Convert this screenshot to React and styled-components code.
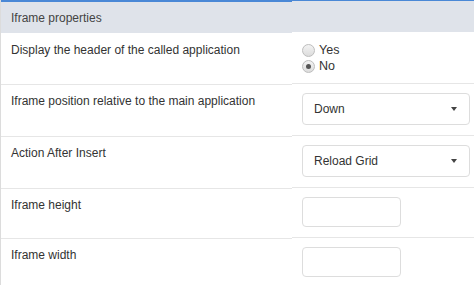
import React from 'react'
import styled, { createGlobalStyle } from 'styled-components'

const Global = createGlobalStyle`
    body {
        margin: 0;
        background: #fff;
        font-family: "Liberation Sans", Arial, sans-serif;
        font-size: 12px;
        color: #333;
    }
`

const Panel = styled.div`
    width: 474px;
    height: 285px;
    overflow: hidden;
    border-left: 1px solid #dcdcdc;
    box-sizing: border-box;
`

const Row = styled.div`
    display: grid;
    grid-template-columns: 291px 1fr;
`

const HeadCell = styled.div`
    background: #dfe3ea;
    border-top: ${p => (p.$thick ? 2 : 1)}px solid #4a88d6;
    height: 31px;
    padding-left: 10px;
    display: flex;
    align-items: center;
    color: #444;
`

const Label = styled.div`
    padding: 10px 10px 0 10px;
    line-height: 14px;
    box-shadow: 0 1px 0 #e6e6e6;
`

const Field = styled.div`
    padding: ${p => p.$top}px 4px ${p => p.$bottom}px 10px;
    border-bottom: 1px solid #e6e6e6;
`

const RadioLine = styled.label`
    display: flex;
    align-items: center;
    height: 16px;
    gap: 4px;
    font-size: 12.5px;
`

const Radio = styled.span`
    width: 11px;
    height: 11px;
    border-radius: 50%;
    border: 1px solid #bdbdbd;
    background: linear-gradient(#f3f3f3, #dcdcdc);
    display: inline-flex;
    align-items: center;
    justify-content: center;
    &::after {
        content: '';
        width: 5px;
        height: 5px;
        border-radius: 50%;
        background: ${p => (p.$checked ? '#555' : 'transparent')};
    }
`

const Select = styled.div`
    height: 30px;
    border: 1px solid #dddddd;
    border-radius: 4px;
    display: flex;
    align-items: center;
    justify-content: space-between;
    padding: 0 12px 0 11px;
    font-size: 12px;
    &::after {
        content: '';
        border-left: 3.5px solid transparent;
        border-right: 3.5px solid transparent;
        border-top: 4px solid #444;
    }
`

const TextBox = styled.div`
    width: 97px;
    height: 28px;
    border: 1px solid #dddddd;
    border-radius: 4px;
`

const rows = [
    { label: 'Iframe position relative to the main application', select: 'Down' },
    { label: 'Action After Insert', select: 'Reload Grid' },
]

const App = () => (
    <>
        <Global />
        <Panel>
            <Row>
                <HeadCell $thick>Iframe properties</HeadCell>
                <HeadCell />
            </Row>
            <Row>
                <Label>Display the header of the called application</Label>
                <Field $top={9} $bottom={9}>
                    <RadioLine><Radio />Yes</RadioLine>
                    <RadioLine><Radio $checked />No</RadioLine>
                </Field>
            </Row>
            {rows.map(r => (
                <Row key={r.label}>
                    <Label>{r.label}</Label>
                    <Field $top={9} $bottom={10}>
                        <Select>{r.select}</Select>
                    </Field>
                </Row>
            ))}
            <Row>
                <Label>Iframe height</Label>
                <Field $top={9} $bottom={10}>
                    <TextBox />
                </Field>
            </Row>
            <Row>
                <Label>Iframe width</Label>
                <Field $top={9} $bottom={10}>
                    <TextBox />
                </Field>
            </Row>
        </Panel>
    </>
)

export default App
